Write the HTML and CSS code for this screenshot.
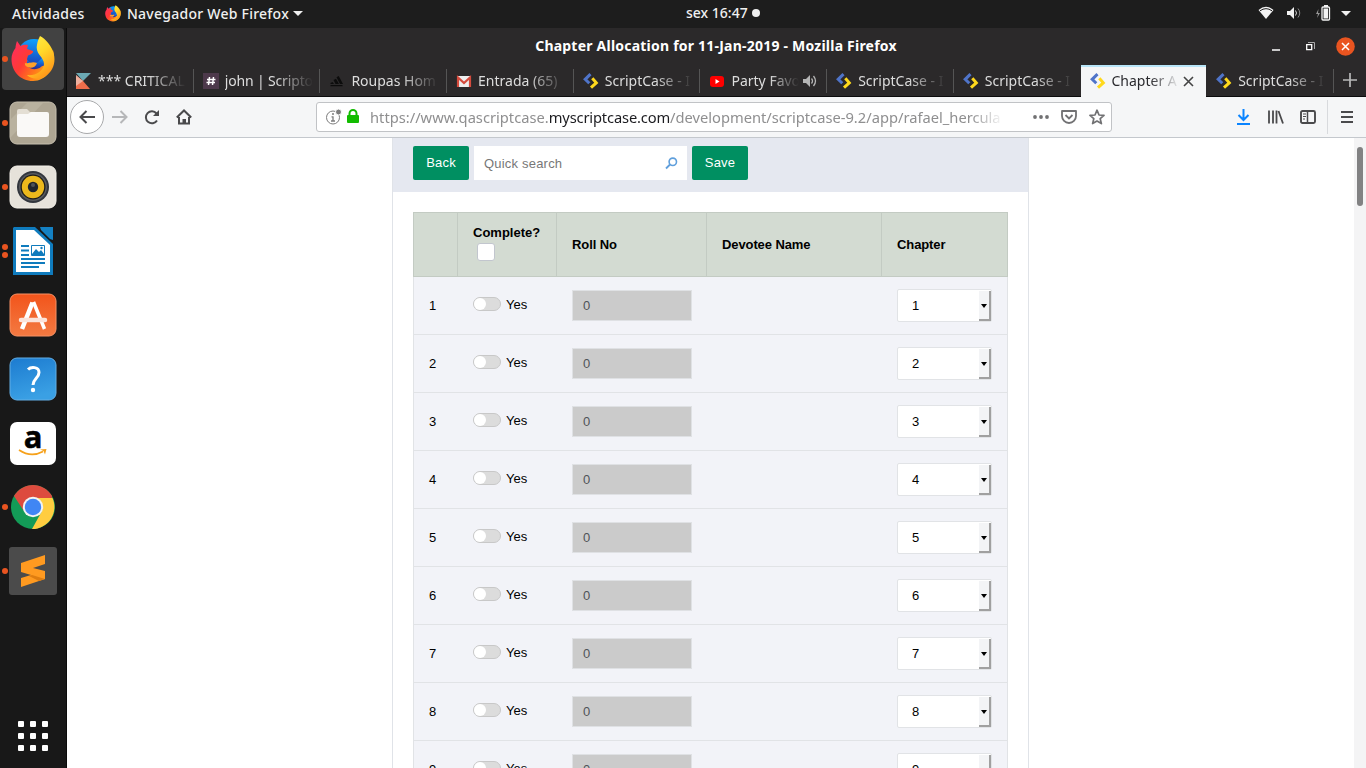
FILE: index.html
```html
<!DOCTYPE html>
<html lang="pt-BR">
<head>
<meta charset="utf-8">
<title>Chapter Allocation for 11-Jan-2019</title>
<link rel="stylesheet" href="styles.css">
</head>
<body>
<svg class="defs" width="0" height="0">
  <defs>
    <linearGradient id="ffBody" x1="0" y1="0.2" x2="1" y2="0.8"><stop offset="0" stop-color="#ff2f5a"/><stop offset=".35" stop-color="#ff3a35"/><stop offset=".65" stop-color="#ff7a1a"/><stop offset="1" stop-color="#ffc21a"/></linearGradient>
    <linearGradient id="ffBlue" x1=".5" y1="0" x2=".4" y2="1"><stop offset="0" stop-color="#0aa3ff"/><stop offset=".6" stop-color="#1755c8"/><stop offset="1" stop-color="#352a86"/></linearGradient>
    <linearGradient id="ffTail" x1="0" y1="0" x2=".5" y2="1"><stop offset="0" stop-color="#fff04a"/><stop offset=".5" stop-color="#ffd92a"/><stop offset="1" stop-color="#ff9a1a"/></linearGradient>
    <linearGradient id="softBg" x1="0" y1="0" x2="0" y2="1"><stop offset="0" stop-color="#f2541b"/><stop offset="1" stop-color="#f37a42"/></linearGradient>
    <linearGradient id="helpBg" x1="0" y1="0" x2=".3" y2="1"><stop offset="0" stop-color="#1c7bd0"/><stop offset="1" stop-color="#3aa0e4"/></linearGradient>
  </defs>
  <symbol id="firefox" viewBox="0 0 44 46">
    <circle cx="23" cy="20" r="17" fill="url(#ffBlue)"/>
    <path d="M6 5 L9.500 10 C12 8.500 14.500 8.500 17 9 L16 13 L22 15 C22.500 17 20 18.500 17 19.500 L16 23 C17 28 24 28.500 27 26.500 C22 32 17 32 14 29 L33 30 L38 20 L42 14 C46 27 38 45 22 45 C9 45 .5 35 .5 23 C.5 19 2 15 4.500 12 C4.500 10 5 8 6 5Z" fill="url(#ffBody)"/>
    <path d="M16 24 C18 28 22 28 27 26 L32 21 L33 28 C28 35 20 34 16 30Z" fill="url(#ffBlue)"/>
    <path d="M29 0 C35 3 39 9 41 13 C46 23 43 34 36 39 C30 44 21 44 16 39 C24 40 32 36 33 28 C33 21 24 18 26 9 C26.500 5 28 2 29 0Z" fill="url(#ffTail)"/>
    <path d="M14 27 C18 28 21 25 26 27 C24 33 17 33 14 29Z" fill="#ffa12b"/>
  </symbol>
  <symbol id="scase" viewBox="0 0 16 16"><path d="M7.500 1.200 2.200 6.300 6.300 10.300" fill="none" stroke="#4f74c9" stroke-width="3"/><path d="M9.300 5.300 13.300 9.800 8 14.700" fill="none" stroke="#ffd91c" stroke-width="3"/></symbol>
</svg>

<header class="topbar">
  <span class="activities">Atividades</span>
  <svg class="app-ico" width="16" height="17"><use href="#firefox"/></svg>
  <span class="app-name">Navegador Web Firefox</span>
  <i class="caret app-caret"></i>
  <span class="clock">sex 16:47<i></i></span>
  <div class="status">
    <svg width="16" height="14" viewBox="0 0 16 14"><path d="M.5 4Q8-2.500 15.500 4L8 13Z" fill="#f2f2f2"/><path d="M2 4.800Q8 .5 14 4.800" fill="none" stroke="#1d1d1d" stroke-width="1"/></svg>
    <svg class="vol" width="16" height="14" viewBox="0 0 16 14"><path d="M1 5h3l4-4v12L4 9H1z" fill="#f2f2f2"/><path d="M9.500 4.500q2 2.500 0 5" fill="none" stroke="#ddd"/><path d="M12 2.500q3.500 4.500 0 9" fill="none" stroke="#888"/></svg>
    <svg class="bat" width="16" height="16" viewBox="0 0 16 16"><path d="M3.500 4 1 9h2l-1 4 3-5H3z" fill="#999"/><rect x="7" y="2" width="7.500" height="13" rx="1" fill="none" stroke="#f2f2f2" stroke-width="1.300"/><path d="M9 0h4v2H9zM8.500 3.500h4.500v10H8.500z" fill="#f2f2f2"/></svg>
    <i class="caret"></i>
  </div>
</header>

<div class="desktop">
  <nav class="dock">
    <div class="app active one"><svg width="44" height="46"><use href="#firefox"/></svg></div>
    <div class="app one"><svg width="48" height="44" viewBox="0 0 48 44"><rect x="1" y="1" width="46" height="42" rx="7" fill="#aea693" stroke="#c6bfae"/><path d="M2 36 34 2H18L2 18z" fill="#b9b29f"/><path d="M8 10q0-2 2-2h8l3 3h11v12H8z" fill="#e4dfd4"/><path d="M8 15q0-2 2-2h9l3-2h16q2 0 2 2v20q0 3-3 3H11q-3 0-3-3z" fill="#faf9f7"/></svg></div>
    <div class="app one"><svg width="48" height="44" viewBox="0 0 48 44"><rect x="1" y="1" width="46" height="42" rx="7" fill="#e6e2da" stroke="#f4f1ea"/><circle cx="24" cy="22" r="16" fill="#32363d"/><circle cx="24" cy="22" r="14" fill="#595b5f"/><circle cx="24" cy="22" r="12.500" fill="#1d1c18"/><circle cx="24" cy="22" r="11.200" fill="#edb91c"/><circle cx="24" cy="22" r="5.200" fill="#20262c"/><circle cx="24" cy="20" r="2" fill="#4d5358"/></svg></div>
    <div class="app two"><svg width="42" height="48" viewBox="0 0 42 48"><path d="M2 0H23L41 17V48H1V1z" fill="#0f7bbd"/><path d="M4 3H22L38 18V45H4z" fill="#fff"/><path d="M28 0H41V13L38 12 29 3z" fill="#1481c3"/><path d="M9 19h8M9 23.500h8M9 28h8M9 32h24M9 36h24M9 40h18" stroke="#0f7bbd" stroke-width="2"/><path d="M19.500 18.500h13v10h-13z" fill="#fff" stroke="#0f7bbd"/><path d="M20 27l4-5 3 3 2-2 3 4v2H20z" fill="#0f7bbd"/><circle cx="29.500" cy="21" r="1.200" fill="#0f7bbd"/></svg></div>
    <div class="app"><svg width="48" height="44" viewBox="0 0 48 44"><rect x="1" y="1" width="46" height="42" rx="7" fill="url(#softBg)" stroke="#f79164"/><path d="M13 36 23.500 9.500" fill="none" stroke="#fff" stroke-width="4.500"/><path d="M24.500 9 35.500 36" fill="none" stroke="#fff" stroke-width="3.500"/><path d="M12 27H36" stroke="#fbe3da" stroke-width="4.500" stroke-linecap="round"/></svg></div>
    <div class="app"><svg width="48" height="44" viewBox="0 0 48 44"><rect x="1" y="1" width="46" height="42" rx="7" fill="url(#helpBg)" stroke="#62aee5"/><path d="M19 12.500C22 9.500 30 9.500 30 15.500C30 21 24 21.500 24 28" fill="none" stroke="#fff" stroke-width="3"/><circle cx="24" cy="33" r="2.200" fill="#fff"/></svg></div>
    <div class="app"><div class="amazon"><b>a</b><svg width="30" height="9" viewBox="0 0 30 9"><path d="M1 2Q13 10 25 3.500" fill="none" stroke="#f6a11b" stroke-width="1.700"/><path d="M22 1.500 28.500 1 27 6.500 25.500 3z" fill="#f6a11b"/></svg></div></div>
    <div class="app one"><svg width="46" height="46" viewBox="0 0 46 46"><circle cx="23" cy="23" r="22" fill="#139b57"/><path d="M4 12A22 22 0 0 1 42 12L42 14H23L13.500 26.500z" fill="#dd4b3e"/><path d="M42 13A22 22 0 0 1 22 45L32 27Q34 18 27 14H42.500z" fill="#ffcd40"/><circle cx="23" cy="23" r="10.200" fill="#f3f3f3"/><circle cx="23" cy="23" r="8.200" fill="#4086f4"/></svg></div>
    <div class="app one"><svg width="48" height="48" viewBox="0 0 48 48"><rect width="48" height="48" rx="3" fill="#4b4b4b"/><path d="M12 16 36 8V17L24 21 36 24V32L12 40V31L22 28 12 25z" fill="#ff9a20"/><path d="M23 28 36 32 30 34 20 29z" fill="#df7d10"/></svg></div>
    <div class="grid-btn"><i></i><i></i><i></i><i></i><i></i><i></i><i></i><i></i><i></i></div>
  </nav>

  <main class="browser">
    <div class="titlebar">
      <span class="title">Chapter Allocation for 11-Jan-2019 - Mozilla Firefox</span>
      <div class="winbtns">
        <svg width="8" height="10"><path d="M0 8h8" stroke="#fff" stroke-width="1.500"/></svg>
        <svg width="9" height="9" viewBox="0 0 9 9"><path d="M.7 2.700h5v5h-5z" fill="none" stroke="#fff" stroke-width="1.300"/><path d="M2 .5h6.500V7" fill="none" stroke="#aaa"/></svg>
        <svg width="19" height="19" viewBox="0 0 19 19"><circle cx="9.500" cy="9.500" r="9.300" fill="#e95420"/><path d="M6 6l7 7M13 6l-7 7" stroke="#fff" stroke-width="1.500"/></svg>
      </div>
    </div>

    <div class="tabs">
      <div class="tab"><svg width="16" height="16" viewBox="0 0 16 16"><path d="M0 0h15L7 8z" fill="#6ba9b4"/><path d="M0 2v12l7-6z" fill="#e9c0b4"/><path d="M0 3l7 5 7 8H0z" fill="#ee6d4b"/><path d="M0 3v10l7-5z" fill="#eeb09e"/></svg><span class="label">*** CRITICAL</span></div>
      <div class="tab"><svg width="16" height="16" viewBox="0 0 16 16"><path d="M0 0h16v16H0z" fill="#4d394b"/><path d="M6.500 4 5.500 12M10.500 4 9.500 12M4 6.500h8.500M3.500 9.500H12" stroke="#fff" stroke-width="1.500"/></svg><span class="label tight">john | Scripto</span></div>
      <div class="tab"><svg width="16" height="16" viewBox="0 0 16 16"><path d="M1.500 10l2-1 1.500 2H1.500zM4.500 7l2.500-1.200L10 11H6.500zM7.500 4.200l2.200-1.200L14 11h-3zM1.500 12h12v1.300h-12z" fill="#0c0c0c"/></svg><span class="label">Roupas Hom</span></div>
      <div class="tab"><svg width="16" height="16" viewBox="0 0 16 16"><path d="M1 3h14v11H1z" fill="#eee"/><path d="M2 14V4.500L8 10l6-5.500V14" fill="none" stroke="#d54b3d" stroke-width="2.200"/></svg><span class="label">Entrada (65)</span></div>
      <div class="tab"><svg width="16" height="16"><use href="#scase"/></svg><span class="label">ScriptCase - I</span></div>
      <div class="tab"><svg width="16" height="16" viewBox="0 0 16 16"><rect x="1" y="3" width="14" height="11" rx="3" fill="#f00"/><path d="M6.500 6v5l4-2.500z" fill="#fff"/></svg><span class="label short">Party Favo</span><svg class="sound" width="14" height="14" viewBox="0 0 14 14"><path d="M0 5h3l4-4v12L3 9H0z" fill="#b5b5b5"/><path d="M8.500 4.500q2 2.500 0 5M10.500 2q4 5 0 10" fill="none" stroke="#b5b5b5" stroke-width="1.300"/></svg></div>
      <div class="tab"><svg width="16" height="16"><use href="#scase"/></svg><span class="label">ScriptCase - I</span></div>
      <div class="tab nosep"><svg width="16" height="16"><use href="#scase"/></svg><span class="label">ScriptCase - I</span></div>
      <div class="tab current"><svg width="16" height="16"><use href="#scase"/></svg><span class="label short">Chapter A</span><svg class="close" width="11" height="11" viewBox="0 0 11 11"><path d="M1 1l9 9M10 1l-9 9" stroke="#444" stroke-width="1.600"/></svg></div>
      <div class="tab"><svg width="16" height="16"><use href="#scase"/></svg><span class="label">ScriptCase - I</span></div>
      <svg class="plus" width="14" height="14" viewBox="0 0 14 14"><path d="M7 0v14M0 7h14" stroke="#b9b9b9" stroke-width="1.700"/></svg>
    </div>

    <div class="navbar">
      <div class="back"><svg width="16" height="14" viewBox="0 0 16 14"><path d="M16 7H1.500M7.500 1l-6 6 6 6" fill="none" stroke="#4a4a4c" stroke-width="2"/></svg></div>
      <svg class="fwd" width="16" height="14" viewBox="0 0 16 14"><path d="M0 7h14.500M8.500 1l6 6-6 6" fill="none" stroke="#b6b7b9" stroke-width="2"/></svg>
      <svg class="reload" width="16" height="16" viewBox="0 0 16 16"><path d="M13 11.500A6 6 0 1 1 12.500 4.500" fill="none" stroke="#4a4a4c" stroke-width="2"/><path d="M15 1v6H9z" fill="#4a4a4c"/></svg>
      <svg class="home" width="16" height="16" viewBox="0 0 16 16"><path d="M.8 8.500 8 1.500l7.200 7M3 8v6.500h10V8" fill="none" stroke="#4a4a4c" stroke-width="2"/><path d="M6.500 15v-5h3.500v5z" fill="#4a4a4c"/></svg>
      <div class="urlbar">
        <svg class="info" width="16" height="16" viewBox="0 0 16 16"><circle cx="7" cy="8.500" r="6.500" fill="none" stroke="#7d7d7d"/><path d="M7 7.500V12M5.500 7.800h2M5 12h4" stroke="#7d7d7d" stroke-width="1.300"/><circle cx="7" cy="5" r="1" fill="#7d7d7d"/><circle cx="12.500" cy="3" r="3" fill="#7d7d7d" stroke="#fff"/></svg>
        <svg class="lock" width="12" height="14" viewBox="0 0 12 14"><rect y="6" width="12" height="8" rx="1" fill="#12bc00"/><path d="M2.500 7V4.500a3.500 3.500 0 0 1 7 0V7" fill="none" stroke="#12bc00" stroke-width="2"/></svg>
        <span class="url"><span class="u1">https://www.qascriptcase.</span><span class="u2">myscriptcase.com</span><span class="u3">/development/scriptcase-9.2/app/rafael_hercula</span></span>
        <svg class="dots" width="16" height="4"><circle cx="2" cy="2" r="1.900"/><circle cx="8" cy="2" r="1.900"/><circle cx="14" cy="2" r="1.900"/></svg>
        <svg class="pocket" width="16" height="14" viewBox="0 0 16 14"><path d="M1 1h14v5a7 7 0 0 1-14 0z" fill="none" stroke="#717173" stroke-width="1.800" stroke-linejoin="round"/><path d="M4.500 5 8 8.500 11.500 5" fill="none" stroke="#717173" stroke-width="1.800"/></svg>
        <svg class="star" width="16" height="16" viewBox="0 0 16 16"><path d="M8 1.200 10 6l5 .4-3.800 3.300 1.200 4.900L8 12l-4.400 2.600 1.200-4.900L1 6.400 6 6z" fill="none" stroke="#717173" stroke-width="1.700" stroke-linejoin="round"/></svg>
      </div>
      <svg class="dl" width="13" height="16" viewBox="0 0 13 16"><path d="M6.500 0v10.500M1.500 6l5 5 5-5M0 15h13" fill="none" stroke="#0a84ff" stroke-width="2"/></svg>
      <svg class="lib" width="16" height="14" viewBox="0 0 16 14"><path d="M1 .5v13M5 .5v13M8.500 .5v13M10.500 1l4.500 12.500" stroke="#4a4a4c" stroke-width="1.800"/></svg>
      <svg class="side" width="16" height="14" viewBox="0 0 16 14"><rect x="1" y="1" width="14" height="12" rx="1.500" fill="none" stroke="#4a4a4c" stroke-width="1.900"/><path d="M7.500 1v12" stroke="#4a4a4c" stroke-width="1.500"/><path d="M3 4h3M3 6.500h3M3 9h2" stroke="#4a4a4c"/></svg>
      <div class="menu"><svg width="12" height="12"><path d="M0 1h12M0 6h12M0 11h12" stroke="#4a4a4c" stroke-width="1.900"/></svg></div>
    </div>

    <div class="viewport">
      <div class="page">
        <div class="sheet">
          <div class="toolbar">
            <button class="btn">Back</button>
            <div class="search"><span>Quick search</span><svg width="13" height="13" viewBox="0 0 13 13"><circle cx="7.800" cy="4.800" r="3.700" fill="none" stroke="#5f9fdc" stroke-width="1.600"/><path d="M5 7.500 1 11.500" stroke="#5f9fdc" stroke-width="1.800"/></svg></div>
            <button class="btn save">Save</button>
          </div>
          <div class="table">
            <div class="row head"><div></div><div class="complete"><span>Complete?</span><i class="check"></i></div><div>Roll No</div><div>Devotee Name</div><div>Chapter</div></div>
            <div class="row"><div>1</div><div><i class="switch"></i>Yes</div><div><span class="roll">0</span></div><div></div><div><span class="select">1<i></i></span></div></div>
            <div class="row"><div>2</div><div><i class="switch"></i>Yes</div><div><span class="roll">0</span></div><div></div><div><span class="select">2<i></i></span></div></div>
            <div class="row"><div>3</div><div><i class="switch"></i>Yes</div><div><span class="roll">0</span></div><div></div><div><span class="select">3<i></i></span></div></div>
            <div class="row"><div>4</div><div><i class="switch"></i>Yes</div><div><span class="roll">0</span></div><div></div><div><span class="select">4<i></i></span></div></div>
            <div class="row"><div>5</div><div><i class="switch"></i>Yes</div><div><span class="roll">0</span></div><div></div><div><span class="select">5<i></i></span></div></div>
            <div class="row"><div>6</div><div><i class="switch"></i>Yes</div><div><span class="roll">0</span></div><div></div><div><span class="select">6<i></i></span></div></div>
            <div class="row"><div>7</div><div><i class="switch"></i>Yes</div><div><span class="roll">0</span></div><div></div><div><span class="select">7<i></i></span></div></div>
            <div class="row"><div>8</div><div><i class="switch"></i>Yes</div><div><span class="roll">0</span></div><div></div><div><span class="select">8<i></i></span></div></div>
            <div class="row"><div>9</div><div><i class="switch"></i>Yes</div><div><span class="roll">0</span></div><div></div><div><span class="select">9<i></i></span></div></div>
          </div>
        </div>
      </div>
      <div class="scrollbar"><i></i></div>
    </div>
  </main>
</div>
</body>
</html>
```
FILE: styles.css
```css
* { box-sizing: border-box; }
body { margin: 0; width: 1366px; height: 768px; overflow: hidden; display: flex; flex-direction: column; font: 14px "Noto Sans", "Open Sans", sans-serif; background: #fff; }
svg, i { display: block; flex: none; }
.defs { position: absolute; }

.topbar { height: 28px; flex: none; background: #1d1d1d; color: #f0f0f0; display: grid; grid-template-columns: 93px 16px 168px 10px 1fr auto; align-items: center; padding: 0 15px 2px 12px; font-size: 14px; font-weight: 500; position: relative; }
.activities { letter-spacing: .3px; }
.app-name { padding-left: 6px; white-space: nowrap; letter-spacing: .25px; }
.caret { width: 0; height: 0; border: 5px solid transparent; border-top-color: #f0f0f0; border-bottom: 0; }
.app-caret { margin-left: 4px; }
.clock { position: absolute; left: 686px; top: 3px; display: flex; align-items: center; gap: 4px; }
.clock i { width: 8px; height: 8px; border-radius: 50%; background: #f0f0f0; }
.status { grid-column: 6; display: flex; align-items: center; }
.status .vol { margin-left: 12px; }
.status .bat { margin-left: 13px; }
.status .caret { margin-left: 10px; }

.desktop { flex: 1; display: flex; min-height: 0; }
.dock { width: 67px; flex: none; background: #181818; border-right: 1px solid #0b0b0b; display: flex; flex-direction: column; gap: 2px; }
.app { position: relative; width: 62px; height: 62px; margin-left: 2px; border-radius: 4px; display: flex; align-items: center; justify-content: center; }
.app.active { background: #424242; }
.one::before, .two::before { content: ""; position: absolute; left: 0; top: 28px; width: 6px; height: 6px; border-radius: 50%; background: #e95420; }
.two::before { top: 24px; box-shadow: 0 8px #e95420; }
.amazon { width: 46px; height: 43px; background: #fff; border-radius: 7px; display: flex; flex-direction: column; align-items: center; }
.amazon b { font: bold 31px/28px "Open Sans", sans-serif; color: #000; -webkit-text-stroke: .5px #000; height: 26px; }
.grid-btn { display: grid; grid-template-columns: repeat(3, 6px); gap: 6px; margin: auto 0 17px 18px; }
.grid-btn i { width: 6px; height: 6px; border-radius: 1px; background: #fff; }

.browser { flex: 1; min-width: 0; display: flex; flex-direction: column; }
.titlebar { height: 37px; flex: none; background: #2b292a; position: relative; text-align: center; color: #fff; font-weight: 700; font-size: 14px; letter-spacing: .22px; line-height: 36px; padding-right: 1px; }
.winbtns { position: absolute; right: 11px; top: 9px; display: flex; gap: 26px; align-items: center; }
.winbtns svg:last-child { margin-left: -5px; }
.tabs { height: 32px; flex: none; background: #2b292a; border-bottom: 1px solid #0c0c0d; display: grid; grid-template-columns: repeat(10, 126.7px) 33px; }
.tab { position: relative; display: flex; align-items: center; padding-left: 9px; gap: 6px; color: #ddd; }
.tab::after { content: ""; position: absolute; right: 0; top: 4px; width: 1px; height: 24px; background: #555; }
.tab.nosep::after, .tab.current::after { display: none; }
.label { width: 90px; white-space: nowrap; line-height: 24px; -webkit-mask-image: linear-gradient(90deg, #000 50px, transparent 88px); mask-image: linear-gradient(90deg, #000 50px, transparent 88px); }
.label.tight { letter-spacing: -.15px; }
.label.short { width: 70px; -webkit-mask-image: linear-gradient(90deg, #000 38px, transparent 68px); mask-image: linear-gradient(90deg, #000 38px, transparent 68px); }
.tab .sound { position: absolute; right: 10px; }
.tab.current { background: #f5f6f7; color: #2a2a2e; border-top: 2px solid #b8e5f8; height: 32px; padding-bottom: 2px; width: 125px; }
.tab.current .close { position: absolute; right: 12px; top: 9px; }
.plus { place-self: center; margin-top: -2px; }

.navbar { height: 41px; flex: none; background: #f5f6f7; border-bottom: 1px solid #c4c8cd; display: flex; align-items: center; padding-left: 3px; }
.back { width: 34px; height: 34px; border: 1px solid #a8a9ab; border-radius: 50%; background: #fff; display: flex; align-items: center; justify-content: center; }
.fwd { margin-left: 8px; }
.reload { margin-left: 16px; }
.home { margin-left: 16px; }
.urlbar { width: 796px; height: 30px; margin-left: 124px; background: #fff; border: 1px solid #c1c3c6; border-radius: 3px; display: flex; align-items: center; padding-left: 9px; }
.lock { margin-left: 5px; margin-top: -2px; }
.url { width: 632px; margin-left: 11px; display: flex; white-space: nowrap; color: #8f8f90; font-size: 14.7px; line-height: 24px; -webkit-mask-image: linear-gradient(90deg, #000 600px, transparent 634px); mask-image: linear-gradient(90deg, #000 600px, transparent 634px); }
.u2 { color: #1c1c20; letter-spacing: -.15px; }
.dots { margin-left: 31px; fill: #717173; }
.pocket { margin-left: 12px; }
.star { margin-left: 12px; }
.dl { margin-left: 125px; }
.lib { margin-left: 18px; }
.side { margin-left: 16px; }
.menu { margin-left: 11px; height: 34px; border-left: 1px solid #d8dadd; padding-left: 13px; display: flex; align-items: center; }

.viewport { flex: 1; min-height: 0; overflow: hidden; display: flex; font: 13px "Liberation Sans", Arial, sans-serif; color: #000; }
.page { flex: 1; display: flex; justify-content: center; background: #fff; }
.sheet { width: 637px; border: solid #e0e3e8; border-width: 0 1px; height: 700px; }
.toolbar { height: 54px; background: #e5e8f0; padding: 8px 20px; display: flex; }
.btn { width: 56px; height: 34px; border: 0; border-radius: 2px; background: #008f61; color: #fff; font: 13px "Liberation Sans", Arial, sans-serif; letter-spacing: .2px; padding: 0 0 1px; }
.search { width: 213px; height: 34px; margin: 0 5px 0 5px; background: #fff; color: #777; display: flex; align-items: center; justify-content: space-between; padding: 1px 9px 0 10px; letter-spacing: .2px; }
.table { width: 595px; margin: 20px 0 0 20px; }
.row { height: 58px; display: grid; grid-template-columns: 44px 99px 150px 175px 125px; background: #f2f3f8; border: solid #e1e3e6; border-width: 0 1px 1px; }
.row > div { display: flex; align-items: center; padding-left: 15px; }
.head { height: 65px; background: #d3dbd2; border: 1px solid #c3cbc3; font-weight: bold; letter-spacing: -.1px; }
.head > div:not(:last-child) { border-right: 1px solid #c3cbc3; }
.row.head .complete { flex-direction: column; align-items: flex-start; justify-content: center; gap: 3px; padding-bottom: 4px; letter-spacing: 0; }
.check { width: 18px; height: 18px; margin-left: 4px; background: #fff; border: 1px solid #c2c6ce; border-radius: 3px; }
.row:not(.head) > div:nth-child(2) { padding-bottom: 3px; }
.switch { width: 28px; height: 14px; margin-right: 5px; border: 1px solid #c8c8c8; border-radius: 7px; background: #dcdcdc; }
.switch::before { content: ""; display: block; width: 12px; height: 12px; border-radius: 50%; background: #fff; }
.roll { width: 120px; height: 31px; background: #cbcbcb; border: 1px solid #dfe1e4; color: #4f5358; padding-left: 10px; line-height: 29px; }
.select { width: 95px; height: 33px; background: #fff; border: 1px solid #e1e3e6; border-radius: 2px; padding-left: 14px; line-height: 31px; display: flex; justify-content: space-between; }
.select i { position: relative; width: 12px; height: 30px; margin-top: 1px; background: #f3f4f6; border: solid #a0a0a0; border-width: 0 2px 2px 0; }
.select i::after { content: ""; position: absolute; left: 2px; top: 13px; border: 3px solid transparent; border-top: 4px solid #000; border-bottom: 0; }
.scrollbar { width: 12px; background: #f4f4f5; padding: 9px 3px; }
.scrollbar i { width: 6px; height: 59px; border-radius: 3px; background: #828283; }
```
